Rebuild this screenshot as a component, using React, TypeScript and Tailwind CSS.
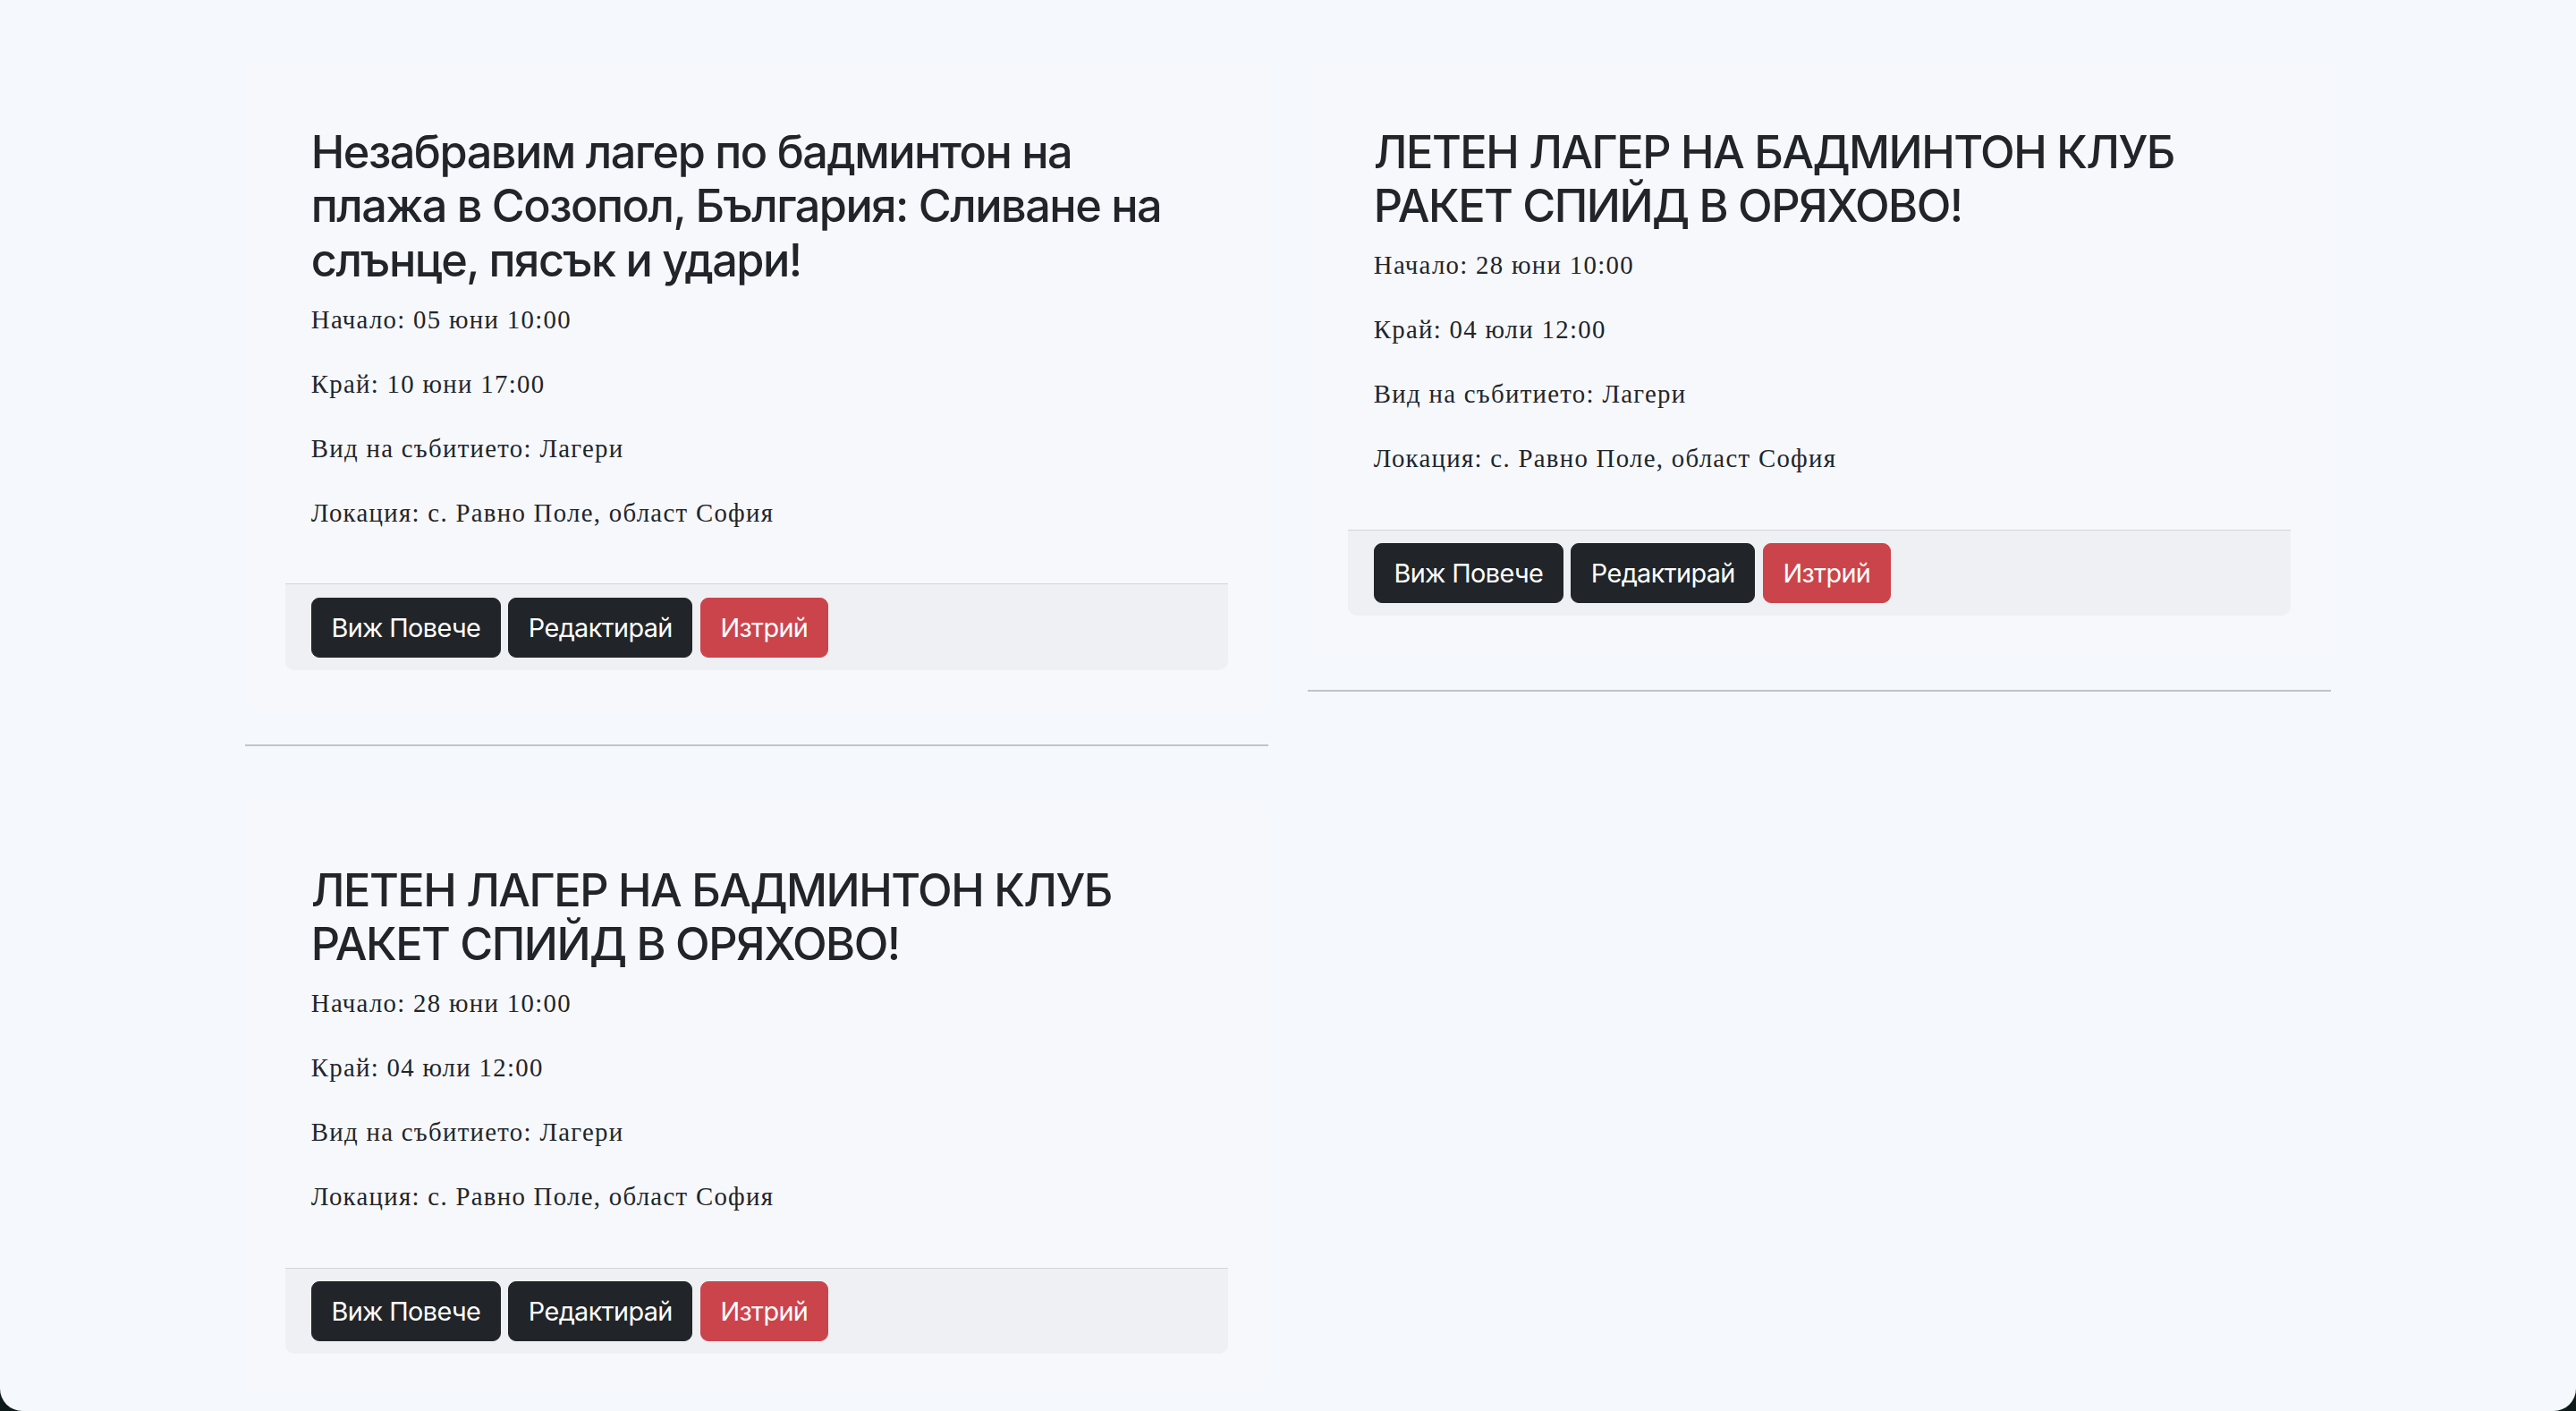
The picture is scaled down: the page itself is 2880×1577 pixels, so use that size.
import React from "react";

type Ev = {
  title: string;
  start: string;
  end: string;
  type: string;
  location: string;
};

const events: Ev[] = [
  {
    title:
      "Незабравим лагер по бадминтон на плажа в Созопол, България: Сливане на слънце, пясък и удари!",
    start: "05 юни 10:00",
    end: "10 юни 17:00",
    type: "Лагери",
    location: "с. Равно Поле, област София",
  },
  {
    title: "ЛЕТЕН ЛАГЕР НА БАДМИНТОН КЛУБ РАКЕТ СПИЙД В ОРЯХОВО!",
    start: "28 юни 10:00",
    end: "04 юли 12:00",
    type: "Лагери",
    location: "с. Равно Поле, област София",
  },
  {
    title: "ЛЕТЕН ЛАГЕР НА БАДМИНТОН КЛУБ РАКЕТ СПИЙД В ОРЯХОВО!",
    start: "28 юни 10:00",
    end: "04 юли 12:00",
    type: "Лагери",
    location: "с. Равно Поле, област София",
  },
];

const serif = { fontFamily: '"Liberation Serif", "DejaVu Serif", serif' };

const pCls = "mb-[28.8px] text-[28.8px] leading-[1.5] tracking-[1.3px] text-[#212529]";
const btnBase =
  "rounded-[9px] border px-[21.6px] py-[10.8px] text-[28.8px] leading-[1.5] tracking-[-0.6px] text-white";

function Card({ ev }: { ev: Ev }) {
  return (
    <div className="flex flex-col">
      <div className="mt-[29px] rounded-[11px] bg-[#f7f8fc] p-[45px]">
        <div className="px-[28.8px] pt-[28.8px] pb-[28.8px]">
          <h3 className="mb-[14.4px] font-['Inter',sans-serif] text-[50.4px] font-medium leading-[1.2] tracking-[-1.5px] text-[#212529]">
            {ev.title}
          </h3>
          <p className={pCls} style={serif}>
            Начало: {ev.start}
          </p>
          <p className={pCls} style={serif}>
            Край: {ev.end}
          </p>
          <p className={pCls} style={serif}>
            Вид на събитието: {ev.type}
          </p>
          <p className={pCls} style={serif}>
            Локация: {ev.location}
          </p>
        </div>
        <div className="flex gap-[8.5px] rounded-b-[10px] border-t border-[#d3d5d9] bg-[#eff0f4] px-[28.8px] py-[14.4px] font-['Inter',sans-serif]">
          <button className={`${btnBase} border-[#212529] bg-[#212529]`}>Виж Повече</button>
          <button className={`${btnBase} border-[#212529] bg-[#212529]`}>Редактирай</button>
          <button className={`${btnBase} border-[#cc444b] bg-[#cc444b]`}>Изтрий</button>
        </div>
      </div>
      <hr className="mt-[38px] mb-[28px] border-0 border-t-2 border-[#c1c4c9]" />
    </div>
  );
}

export default function App() {
  return (
    <div className="h-[1577px] w-[2880px] bg-[#0e1a1a]">
      <div className="h-[1577px] w-[2880px] overflow-hidden rounded-b-[25px] bg-[#f5f8fc]">
        <div className="mx-auto grid w-[2332px] grid-cols-2 items-start gap-x-[44px] pt-[37px]">
          {events.map((ev, i) => (
            <Card key={i} ev={ev} />
          ))}
        </div>
      </div>
    </div>
  );
}
